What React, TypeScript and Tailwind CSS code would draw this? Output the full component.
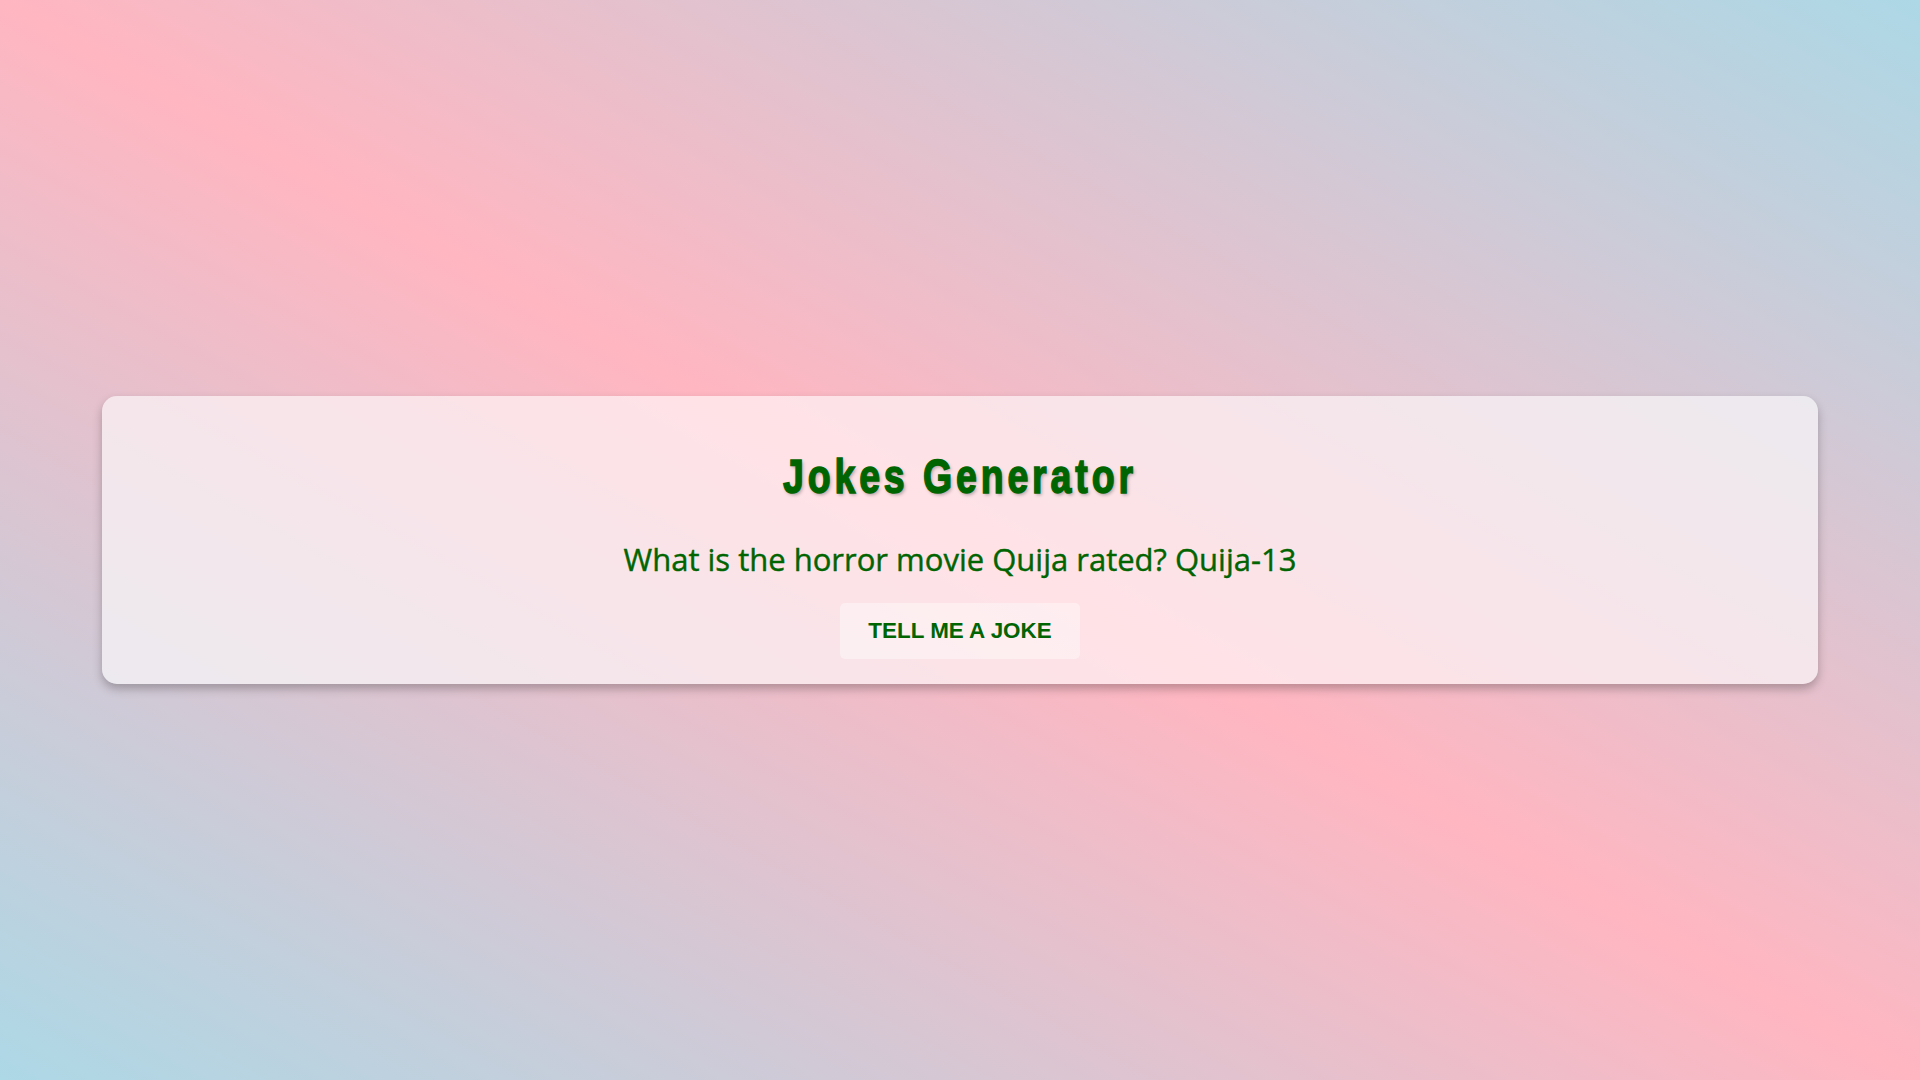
export default function App() {
  return (
    <div className="min-h-screen w-full flex items-center justify-center bg-[linear-gradient(to_top_right,#add8e6,#ffb6c1,#add8e6)]">
      <div className="w-[1716px] rounded-[15px] bg-white/60 shadow-[0_5px_10px_rgba(0,0,0,0.25)] flex flex-col items-center pt-[53px] pb-[25px]">
        <h1 className="h-[56px] leading-[56px] text-[48px] font-bold tracking-[5px] text-[#006400] font-['Liberation_Sans',Arial,sans-serif] scale-x-[0.78] [-webkit-text-stroke:1.5px_#006400] [text-shadow:2px_2px_4px_rgba(0,0,0,0.3)]">
          Jokes Generator
        </h1>
        <p className="mt-[34px] h-[40px] leading-[40px] text-[31px] text-[#006400] font-['Open_Sans',sans-serif] [-webkit-text-stroke:0.4px_#006400]">
          What is the horror movie Quija rated? Quija-13
        </p>
        <button className="mt-[24px] h-[56px] px-[28px] rounded-[5px] bg-white/40 text-[22.4px] font-bold text-[#006400] font-['Liberation_Sans',Arial,sans-serif]">
          TELL ME A JOKE
        </button>
      </div>
    </div>
  );
}
